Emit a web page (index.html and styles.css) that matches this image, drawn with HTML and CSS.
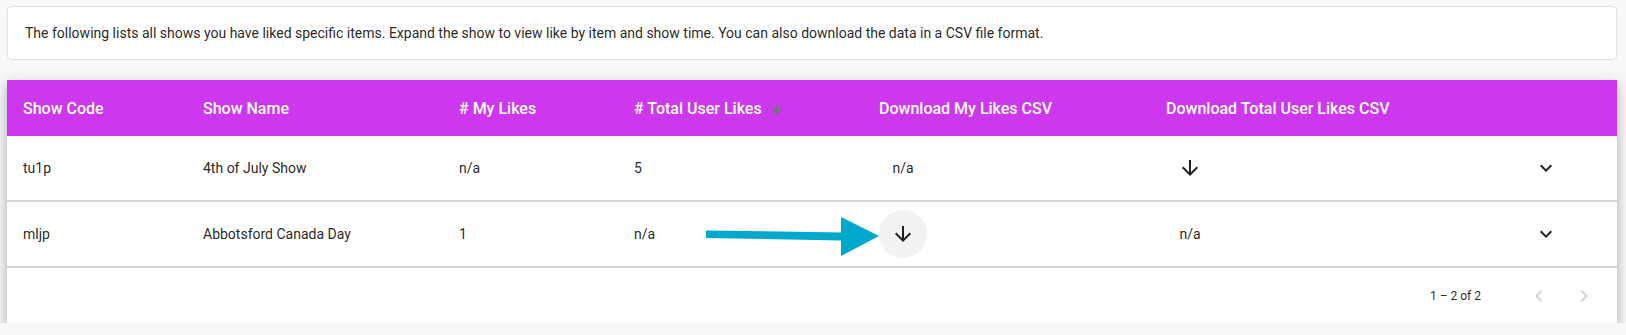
FILE: index.html
```html
<!DOCTYPE html>
<html lang="en">
<head>
  <meta charset="UTF-8">
  <meta name="viewport" content="width=device-width, initial-scale=1.0">
  <title>My Likes</title>
  <link rel="stylesheet" href="styles.css">
</head>
<body>
  <div class="intro">
    The following lists all shows you have liked specific items. Expand the show to view like by item and show time. You can also download the data in a CSV file format.
  </div>

  <div class="likes-card">
    <div class="row head">
      <div>Show Code</div>
      <div>Show Name</div>
      <div># My Likes</div>
      <div class="sorted"># Total User Likes
        <svg class="sort-arrow" viewBox="0 0 24 24"><path d="M20 12l-1.41-1.41L13 16.17V4h-2v12.17l-5.58-5.59L4 12l8 8 8-8z"/></svg>
      </div>
      <div>Download My Likes CSV</div>
      <div>Download Total User Likes CSV</div>
      <div></div>
    </div>

    <div class="row">
      <div>tu1p</div>
      <div>4th of July Show</div>
      <div>n/a</div>
      <div>5</div>
      <div><span class="dl-slot">n/a</span></div>
      <div>
        <span class="dl-slot icon-btn">
          <svg viewBox="0 0 24 24"><path d="M20 12l-1.41-1.41L13 16.17V4h-2v12.17l-5.58-5.59L4 12l8 8 8-8z"/></svg>
        </span>
      </div>
      <div class="expand">
        <svg viewBox="0 0 24 24"><path d="M16.59 8.59L12 13.17 7.41 8.59 6 10l6 6 6-6z"/></svg>
      </div>
    </div>

    <div class="row">
      <div>mljp</div>
      <div>Abbotsford Canada Day</div>
      <div>1</div>
      <div>n/a</div>
      <div>
        <span class="dl-slot icon-btn hover">
          <svg viewBox="0 0 24 24"><path d="M20 12l-1.41-1.41L13 16.17V4h-2v12.17l-5.58-5.59L4 12l8 8 8-8z"/></svg>
        </span>
      </div>
      <div><span class="dl-slot">n/a</span></div>
      <div class="expand">
        <svg viewBox="0 0 24 24"><path d="M16.59 8.59L12 13.17 7.41 8.59 6 10l6 6 6-6z"/></svg>
      </div>
    </div>

    <div class="paginator">
      <span class="range">1 &ndash; 2 of 2</span>
      <span class="page-btn">
        <svg viewBox="0 0 24 24"><path d="M15.41 7.41L14 6l-6 6 6 6 1.41-1.41L10.83 12z"/></svg>
      </span>
      <span class="page-btn">
        <svg viewBox="0 0 24 24"><path d="M10 6L8.59 7.41 13.17 12l-4.58 4.59L10 18l6-6z"/></svg>
      </span>
    </div>

    <!-- annotation arrow pointing at the download button -->
    <svg class="callout" viewBox="698 212 185 48">
      <polygon points="706,230.5 842,232.5 842,240.5 706,238" />
      <polygon points="841,217 879,236 841,256" />
    </svg>
  </div>
</body>
</html>
```

FILE: styles.css
```css
body {
  margin: 0;
  padding: 6px 9px 0 7px;
  background: #f8f8f8;
  font-family: Roboto, "Liberation Sans", sans-serif;
  color: rgba(0, 0, 0, 0.87);
}
.intro {
  background: #fff;
  border: 1px solid #e0e0e0;
  border-radius: 4px;
  padding: 16px 17px;
  font-size: 14px;
  line-height: 20px;
}
.likes-card {
  position: relative;
  margin-top: 20px;
  background: #fff;
  box-shadow: 0 5px 5px -3px rgba(0, 0, 0, 0.2), 0 8px 10px 1px rgba(0, 0, 0, 0.14), 0 3px 14px 2px rgba(0, 0, 0, 0.12);
}
.row {
  display: grid;
  grid-template-columns: 180px 256px 175px 245px 287px 1fr 96px;
  align-items: center;
  height: 64px;
  padding: 0 23px 0 16px;
  border-bottom: 2px solid #d4d4d4;
  font-size: 14px;
}
.row.head {
  height: 56px;
  background: #cd38ef;
  color: #fff;
  font-size: 16px;
  font-weight: 500;
  border-bottom: none;
}
.sorted {
  display: flex;
  align-items: center;
}
.sort-arrow {
  width: 15px;
  height: 15px;
  margin-left: 7px;
  margin-top: 2px;
  fill: #5e7c60;
}
.dl-slot {
  display: inline-flex;
  align-items: center;
  justify-content: center;
  width: 48px;
  height: 48px;
}
.icon-btn svg {
  width: 24px;
  height: 24px;
  fill: #1f1f1f;
}
.icon-btn.hover {
  background: #f2f2f2;
  border-radius: 50%;
}
.expand {
  display: flex;
  justify-content: center;
}
.expand svg {
  width: 24px;
  height: 24px;
  fill: #212121;
}
.paginator {
  display: flex;
  justify-content: flex-end;
  align-items: center;
  height: 55px;
  padding-right: 11px;
  font-size: 12px;
}
.range {
  margin-right: 35px;
}
.page-btn {
  display: inline-flex;
  align-items: center;
  justify-content: center;
  width: 45px;
  height: 45px;
}
.page-btn svg {
  width: 24px;
  height: 24px;
  fill: #d2d2d2;
}
.callout {
  position: absolute;
  left: 691px;
  top: 132px;
  width: 185px;
  height: 48px;
  fill: #00a9cc;
}
```
